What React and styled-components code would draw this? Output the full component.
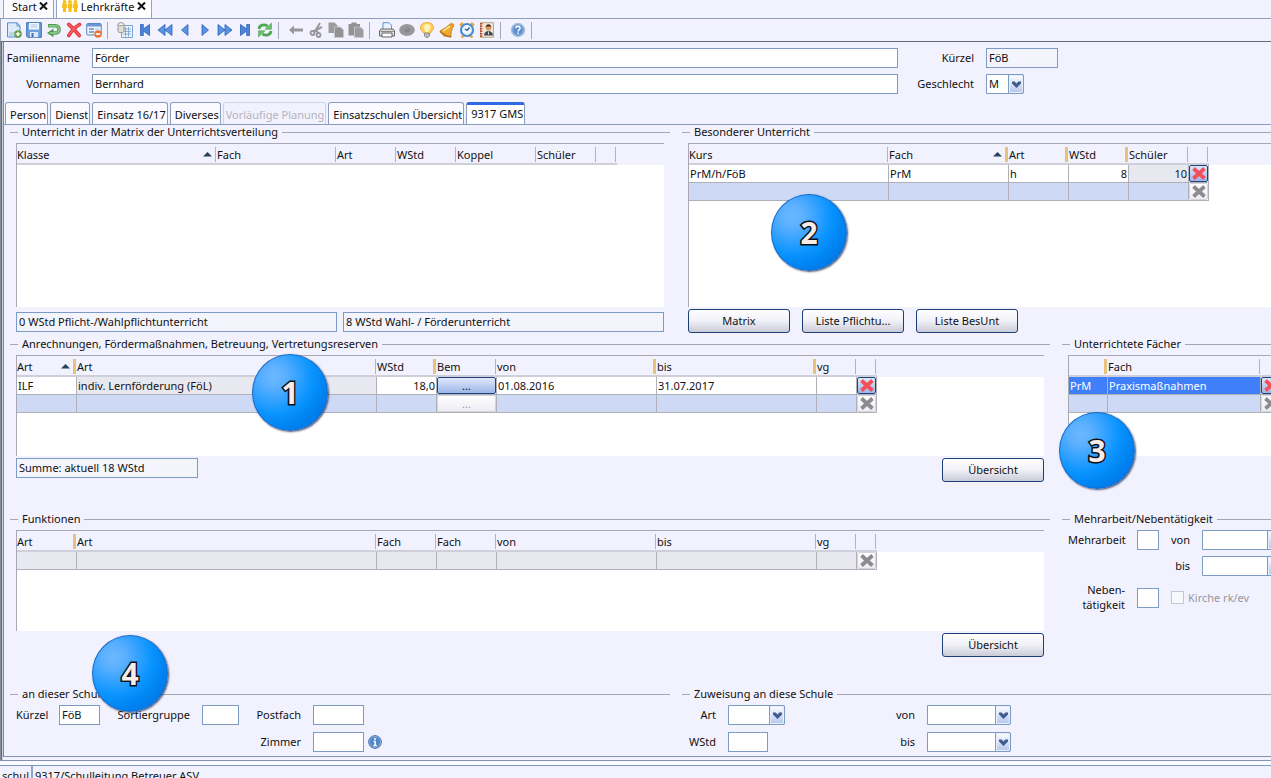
import React, { Fragment } from 'react'
import styled, { createGlobalStyle, css } from 'styled-components'

const App = () => {
    return (
        <Fragment>
            <GlobalStyle />
            <Window>
                <WindowTabs>
                    <WindowTab>
                        Start <CloseButton aria-label="Start schließen"><CloseIcon /></CloseButton>
                    </WindowTab>
                    <WindowTab $active>
                        <PeopleIcon /> Lehrkräfte <CloseButton aria-label="Lehrkräfte schließen"><CloseIcon /></CloseButton>
                    </WindowTab>
                </WindowTabs>
                <Toolbar />
                <Frame>
                    <Panel>
                        <PersonForm />
                        <SectionTabs />
                        <Content>
                            <UpperRow>
                                <Matrix />
                                <SpecialLessons />
                            </UpperRow>
                            <WideRow>
                                <Credits />
                                <Subjects />
                            </WideRow>
                            <WideRow $spaced>
                                <Functions />
                                <ExtraWork />
                            </WideRow>
                            <UpperRow $spaced>
                                <AtSchool />
                                <Assignment />
                            </UpperRow>
                        </Content>
                    </Panel>
                </Frame>
                <StatusBar>
                    <StatusItem>schul</StatusItem>
                    <StatusItem>9317/Schulleitung Betreuer ASV</StatusItem>
                </StatusBar>
                {markers.map((m) => (
                    <Marker key={m.label} $x={m.x} $y={m.y}>{m.label}</Marker>
                ))}
            </Window>
        </Fragment>
    )
}

const markers = [
    { label: '1', x: 290, y: 392 },
    { label: '2', x: 809, y: 232 },
    { label: '3', x: 1097, y: 450 },
    { label: '4', x: 130, y: 673 },
]

/* ---------- sections ---------- */

const Toolbar = () => (
    <ToolbarBar>
        {toolGroups.map((group, i) => (
            <Fragment key={i}>
                {group.map(([name, Icon]) => (
                    <ToolButton key={name} aria-label={name}><Icon /></ToolButton>
                ))}
                <Separator />
            </Fragment>
        ))}
    </ToolbarBar>
)

const PersonForm = () => (
    <PersonGrid>
        <Label htmlFor="familienname">Familienname</Label>
        <TextInput id="familienname" defaultValue="Förder" />
        <Label htmlFor="kuerzel">Kürzel</Label>
        <TextInput id="kuerzel" defaultValue="FöB" readOnly $width={72} />
        <Label htmlFor="vornamen">Vornamen</Label>
        <TextInput id="vornamen" defaultValue="Bernhard" />
        <Label htmlFor="geschlecht">Geschlecht</Label>
        <Combo id="geschlecht" width={38} value="M" />
    </PersonGrid>
)

const sections = ['Person', 'Dienst', 'Einsatz 16/17', 'Diverses', 'Vorläufige Planung', 'Einsatzschulen Übersicht', '9317 GMS']

const SectionTabs = () => (
    <TabList role="tablist">
        {sections.map((s) => (
            <Tab key={s} role="tab" aria-selected={s === '9317 GMS'} disabled={s === 'Vorläufige Planung'}>
                {s}
            </Tab>
        ))}
    </TabList>
)

const Matrix = () => (
    <Group>
        <Legend>Unterricht in der Matrix der Unterrichtsverteilung</Legend>
        <TableBox $height={164}>
            <Grid
                columns={[
                    { label: 'Klasse', width: 200, sorted: true },
                    { label: 'Fach', width: 120 },
                    { label: 'Art', width: 60 },
                    { label: 'WStd', width: 60 },
                    { label: 'Koppel', width: 80 },
                    { label: 'Schüler', width: 60 },
                    { label: '', width: 20 },
                ]}
                rows={[]}
            />
        </TableBox>
        <SummaryRow>
            <TextInput aria-label="Pflichtunterricht" defaultValue="0 WStd Pflicht-/Wahlpflichtunterricht" readOnly />
            <TextInput aria-label="Förderunterricht" defaultValue="8 WStd Wahl- / Förderunterricht" readOnly />
        </SummaryRow>
    </Group>
)

const SpecialLessons = () => (
    <Group $open>
        <Legend>Besonderer Unterricht</Legend>
        <TableBox $height={164}>
            <Grid
                columns={[
                    { label: 'Kurs', width: 200 },
                    { label: 'Fach', width: 120, sorted: true, mark: true },
                    { label: 'Art', width: 60, mark: true },
                    { label: 'WStd', width: 60, mark: true },
                    { label: 'Schüler', width: 60 },
                    { label: '', width: 20 },
                ]}
                rows={[
                    { cells: ['PrM/h/FöB', 'PrM', 'h', { text: '8', right: true }, { text: '10', right: true, tone: 'locked' }, { remove: true }] },
                    { tone: 'blank', cells: ['', '', '', '', '', { remove: false }] },
                ]}
            />
        </TableBox>
        <ButtonRow>
            <Button>Matrix</Button>
            <Button>Liste Pflichtu...</Button>
            <Button>Liste BesUnt</Button>
        </ButtonRow>
    </Group>
)

const Credits = () => (
    <Group>
        <Legend>Anrechnungen, Fördermaßnahmen, Betreuung, Vertretungsreserven</Legend>
        <TableBox $height={101}>
            <Grid
                columns={[
                    { label: 'Art', width: 60, sorted: true, mark: true },
                    { label: 'Art', width: 300 },
                    { label: 'WStd', width: 60, mark: true },
                    { label: 'Bem', width: 60 },
                    { label: 'von', width: 160, mark: true },
                    { label: 'bis', width: 160, mark: true },
                    { label: 'vg', width: 40 },
                    { label: '', width: 20 },
                ]}
                rows={[
                    {
                        cells: ['ILF', { text: 'indiv. Lernförderung (FöL)', tone: 'locked' }, { text: '18,0', right: true },
                            { more: true }, '01.08.2016', '31.07.2017', '', { remove: true }],
                    },
                    { tone: 'blank', cells: ['', '', '', { more: false }, '', '', '', { remove: false }] },
                ]}
            />
        </TableBox>
        <FooterRow>
            <TextInput aria-label="Summe" defaultValue="Summe: aktuell 18 WStd" readOnly $width={182} />
            <Button>Übersicht</Button>
        </FooterRow>
    </Group>
)

const Subjects = () => (
    <Group $open>
        <Legend>Unterrichtete Fächer</Legend>
        <TableBox $height={101}>
            <Grid
                columns={[
                    { label: '', width: 39, mark: true },
                    { label: 'Fach', width: 153 },
                    { label: '', width: 20 },
                ]}
                rows={[
                    { tone: 'selected', cells: ['PrM', 'Praxismaßnahmen', { remove: true }] },
                    { tone: 'blank', cells: ['', '', { remove: false }] },
                ]}
            />
        </TableBox>
    </Group>
)

const Functions = () => (
    <Group>
        <Legend>Funktionen</Legend>
        <TableBox $height={101}>
            <Grid
                columns={[
                    { label: 'Art', width: 60, mark: true },
                    { label: 'Art', width: 300 },
                    { label: 'Fach', width: 60 },
                    { label: 'Fach', width: 60 },
                    { label: 'von', width: 160 },
                    { label: 'bis', width: 160 },
                    { label: 'vg', width: 40 },
                    { label: '', width: 20 },
                ]}
                rows={[{ tone: 'locked', cells: ['', '', '', '', '', '', '', { remove: false }] }]}
            />
        </TableBox>
        <FooterRow>
            <span />
            <Button>Übersicht</Button>
        </FooterRow>
    </Group>
)

const ExtraWork = () => (
    <Group $open>
        <Legend>Mehrarbeit/Nebentätigkeit</Legend>
        <ExtraGrid>
            <Label htmlFor="mehrarbeit">Mehrarbeit</Label>
            <TextInput id="mehrarbeit" />
            <Label htmlFor="mehr-von">von</Label>
            <Combo id="mehr-von" width={81} />
            <span />
            <span />
            <Label htmlFor="mehr-bis">bis</Label>
            <Combo id="mehr-bis" width={81} />
            <Label htmlFor="neben">Neben-<br />tätigkeit</Label>
            <TextInput id="neben" />
            <CheckLabel>
                <CheckBox type="checkbox" disabled />
                Kirche rk/ev
            </CheckLabel>
        </ExtraGrid>
    </Group>
)

const AtSchool = () => (
    <Group>
        <Legend>an dieser Schule</Legend>
        <SchoolGrid>
            <Label htmlFor="schul-kuerzel">Kürzel</Label>
            <TextInput id="schul-kuerzel" defaultValue="FöB" />
            <Label htmlFor="sortiergruppe">Sortiergruppe</Label>
            <TextInput id="sortiergruppe" />
            <Label htmlFor="postfach">Postfach</Label>
            <TextInput id="postfach" $width={51} />
            <RoomLabel htmlFor="zimmer">Zimmer</RoomLabel>
            <RoomField>
                <TextInput id="zimmer" $width={51} />
                <InfoIcon />
            </RoomField>
        </SchoolGrid>
    </Group>
)

const Assignment = () => (
    <Group $open>
        <Legend>Zuweisung an diese Schule</Legend>
        <AssignmentGrid>
            <Label htmlFor="zu-art">Art</Label>
            <Combo id="zu-art" width={57} />
            <Label htmlFor="zu-von">von</Label>
            <Combo id="zu-von" width={84} />
            <Label htmlFor="zu-wstd">WStd</Label>
            <TextInput id="zu-wstd" $width={40} />
            <Label htmlFor="zu-bis">bis</Label>
            <Combo id="zu-bis" width={84} />
        </AssignmentGrid>
    </Group>
)

/* ---------- shared parts ---------- */

const Combo = ({ id, width, value = '' }) => (
    <ComboBox $width={width}>
        <ComboSelect id={id} defaultValue={value}>
            <option value={value}>{value}</option>
        </ComboSelect>
        <ComboArrow>
            <svg width="9" height="7" viewBox="0 0 9 7">
                <path d="M0 0.5h2.6L4.5 2.6 6.4 0.5H9v2L4.5 7 0 2.500z" fill="#3f5c90" />
            </svg>
        </ComboArrow>
    </ComboBox>
)

const Grid = ({ columns, rows }) => (
    <Table $width={columns.reduce((sum, c) => sum + c.width, 0)}>
        <colgroup>
            {columns.map((c, i) => <Col key={i} $width={c.width} />)}
        </colgroup>
        <thead>
            <tr>
                {columns.map((c, i) => (
                    <Th key={i}>
                        <HeadCell $mark={c.mark}>
                            {c.label}
                            {c.sorted && (
                                <svg width="9" height="5" viewBox="0 0 9 5"><path d="M4.5 0L9 4.500H0z" fill="#25435f" /></svg>
                            )}
                        </HeadCell>
                    </Th>
                ))}
            </tr>
        </thead>
        <tbody>
            {rows.map((row, r) => (
                <tr key={r}>
                    {row.cells.map((cell, i) => <Cell key={i} cell={cell} tone={row.tone} />)}
                </tr>
            ))}
        </tbody>
    </Table>
)

const Cell = ({ cell, tone }) => {
    if (cell.remove !== undefined) {
        return (
            <Td $flush>
                <CellButton aria-label="Zeile löschen" disabled={!cell.remove}>
                    <CrossIcon color={cell.remove ? '#f4505a' : '#8c8c8e'} />
                </CellButton>
            </Td>
        )
    }
    if (cell.more !== undefined) {
        return <Td $flush $tone={tone}><CellButton disabled={!cell.more}>...</CellButton></Td>
    }
    return <Td $tone={cell.tone || tone} $right={cell.right}>{cell.text ?? cell}</Td>
}

/* ---------- icons ---------- */

const Svg = ({ children, size = 16 }) => (
    <svg width={size} height={size} viewBox="0 0 16 16" fill="none" aria-hidden="true">{children}</svg>
)

const CloseIcon = () => (
    <svg width="9" height="8" viewBox="0 0 9 8"><path d="M1 0.500L8 7.500M8 0.500L1 7.500" stroke="#111" strokeWidth="2" /></svg>
)

const PeopleIcon = () => (
    <svg width="16" height="12" viewBox="0 0 16 12" fill="#f9bd17">
        {[0, 5.5, 11].map((x) => (
            <g key={x} transform={`translate(${x} 0)`}>
                <circle cx="2.500" cy="1.900" r="1.900" />
                <path d="M0.200 3.500h4.600v4.500L4 8.500V12H1V8.500l-0.800-0.500z" />
            </g>
        ))}
    </svg>
)

const CrossIcon = ({ color }) => (
    <svg width="16" height="15" viewBox="0 0 16 15">
        <path d="M2.500 2.500L13.500 12.500M13.500 2.500L2.500 12.500" stroke={color} strokeWidth="3.800" />
    </svg>
)

const NewIcon = () => (
    <Svg>
        <path d="M1.500 0.800h9.500l3 3.200v11H1.500z" fill="#dcebf9" stroke="#5a8fca" />
        <path d="M11 0.800V4h3z" fill="#fff" stroke="#5a8fca" />
        <path d="M3 10h9v4H3z" fill="#b9d5f0" />
        <circle cx="12" cy="12" r="3.800" fill="#5f9c3c" />
        <path d="M12 9.700v4.600M9.700 12h4.600" stroke="#fff" strokeWidth="1.500" />
    </Svg>
)

const SaveIcon = () => (
    <Svg>
        <path d="M0.700 0.700h14.600v14.600H1.700l-1-1z" fill="#6fa1dc" stroke="#3a6cb4" />
        <path d="M3 1h10v6.500H3z" fill="#f4f9ff" />
        <path d="M4.500 3h7M4.500 5h7" stroke="#a9c3e4" />
        <path d="M4 10h8v5.200H4z" fill="#dfe9f5" />
        <path d="M5.500 11h2v4h-2z" fill="#456fa8" />
    </Svg>
)

const UndoIcon = () => (
    <Svg>
        <path d="M2 3.800h7.500a3.600 3.600 0 0 1 0 7.200H6" stroke="#4f9c50" strokeWidth="3.600" />
        <path d="M7.500 6.500V15.200L1 10.900z" fill="#4f9c50" />
        <path d="M2.600 3.800h6.900a3.600 3.600 0 0 1 0 7.200H4" stroke="#86c884" strokeWidth="1.800" />
    </Svg>
)

const DeleteIcon = () => (
    <Svg>
        <path d="M2.800 2.500Q7 6 13.200 13.500M13.500 2.500Q6.500 7 2.800 13.500" stroke="#e23a3e" strokeWidth="3.600" strokeLinecap="round" />
        <path d="M2.800 2.500Q7 6 13.200 13.500M13.500 2.500Q6.500 7 2.800 13.500" stroke="#f2605e" strokeWidth="1.500" strokeLinecap="round" />
    </Svg>
)

const FormRemoveIcon = () => (
    <Svg>
        <rect x="0.700" y="1.500" width="14.500" height="11.500" rx="1" fill="#eef4fc" stroke="#5a84bd" />
        <path d="M1 2h14v2.500H1z" fill="#6c97d2" />
        <path d="M3 7h5M3 10h5" stroke="#6c8fbe" strokeWidth="1.300" />
        <path d="M9 7h4" stroke="#a9bfdd" />
        <circle cx="12" cy="12" r="3.800" fill="#e8763a" />
        <path d="M9.800 12h4.400" stroke="#fff" strokeWidth="1.600" />
    </Svg>
)

const ListIcon = () => (
    <Svg>
        <path d="M4.500 3.500h11v12h-11z" fill="#eef6fd" stroke="#7ba3d2" />
        <path d="M6 7h8M6 9.500h8M6 12h8M8.500 5v9.500M11.500 5v9.500" stroke="#86abd6" />
        <path d="M1 2.200v7c0 2 6 2 6 0v-7" fill="#dddcd6" stroke="#9c9a92" />
        <ellipse cx="4" cy="2.200" rx="3" ry="1.500" fill="#f7f6f2" stroke="#9c9a92" />
    </Svg>
)

const FirstIcon = () => (
    <Svg><path d="M3.500 2.500h2.800v4.500L12.500 2.500v11L6.300 9v4.500H3.500z" fill="#4b86da" stroke="#2b5fb4" strokeWidth="0.800" /></Svg>
)
const RewindIcon = () => (
    <Svg><path d="M8 2.500v11L1 8zM15 2.500v11L8 8z" fill="#5a93e2" stroke="#2b5fb4" strokeWidth="0.800" /></Svg>
)
const PrevIcon = () => (
    <Svg><path d="M11 2.500v11L4.500 8z" fill="#5a93e2" stroke="#2b5fb4" strokeWidth="0.800" /></Svg>
)
const NextIcon = () => (
    <Svg><path d="M5 2.500v11L11.500 8z" fill="#5a93e2" stroke="#2b5fb4" strokeWidth="0.800" /></Svg>
)
const ForwardIcon = () => (
    <Svg><path d="M1 2.500v11L8 8zM8 2.500v11L15 8z" fill="#5a93e2" stroke="#2b5fb4" strokeWidth="0.800" /></Svg>
)
const LastIcon = () => (
    <Svg><path d="M12.500 2.500H9.700v4.500L3.500 2.500v11L9.700 9v4.500h2.800z" fill="#4b86da" stroke="#2b5fb4" strokeWidth="0.800" /></Svg>
)

const RefreshIcon = () => (
    <Svg>
        <path d="M2 7c0.500-4 5-5.200 8.500-3M14 9c-0.500 4-5 5.200-8.500 3" stroke="#4fa653" strokeWidth="2.800" />
        <path d="M14.500 1v6.200H8z" fill="#6fbd70" stroke="#4fa653" strokeWidth="0.600" />
        <path d="M1.500 15V8.800H8z" fill="#6fbd70" stroke="#4fa653" strokeWidth="0.600" />
    </Svg>
)

const BackIcon = () => (
    <Svg><path d="M1 8l5-4.500V6.500h9v3H6v3z" fill="#97979b" /></Svg>
)

const CutIcon = () => (
    <Svg>
        <path d="M12 1L6.500 10M14 5L5 9.500M8 8l2.500 3.500" stroke="#97979b" strokeWidth="2" />
        <circle cx="4.500" cy="11" r="2" stroke="#97979b" strokeWidth="1.800" />
        <circle cx="10.500" cy="13" r="2" stroke="#97979b" strokeWidth="1.800" />
    </Svg>
)

const CopyIcon = () => (
    <Svg>
        <path d="M0.500 0.500h6l3 3V11h-9z" fill="#9b9b9d" />
        <path d="M6.500 5h6l3 3v7.500h-9z" fill="#929294" stroke="#c9c9d0" strokeWidth="0.800" />
    </Svg>
)

const PasteIcon = () => (
    <Svg>
        <path d="M0.500 2H3l1-1.500h4L9 2h3v11.500H0.500z" fill="#929294" />
        <path d="M6.500 5h6l3 3v7.500h-9z" fill="#9b9b9d" stroke="#c9c9d0" strokeWidth="0.800" />
    </Svg>
)

const PrintIcon = () => (
    <Svg>
        <path d="M4 0.700h6l2.500 2.500V8H4z" fill="#e8f3fe" stroke="#5e93cf" />
        <path d="M2 7h12l1.500 2v5H0.500V9z" fill="#dcdcdc" stroke="#666" />
        <path d="M3 11h10v4H3z" fill="#fafafa" stroke="#666" />
        <path d="M1.500 9.500h13" stroke="#888" />
    </Svg>
)

const EyeIcon = () => (
    <Svg>
        <ellipse cx="8" cy="8" rx="7.800" ry="6" fill="#98989b" />
        <circle cx="8" cy="8" r="2.500" fill="#848488" />
        <path d="M6.500 6.500l2 1" stroke="#b0b0b4" />
    </Svg>
)

const BulbIcon = () => (
    <Svg>
        <path d="M8 0.700c4 0 6.500 2 6.500 4.800 0 2.500-2 3.500-3.500 6H5C3.500 9 1.500 8 1.500 5.500 1.500 2.700 4 0.700 8 0.700z" fill="#ffd35a" stroke="#eca22c" />
        <path d="M8 2.200c3 0 4 2 3 4L9.500 10h-3L5 6.200c-1-2 0-4 3-4z" fill="#fff3b8" />
        <path d="M5.500 11h5v3l-1.500 1.500H7L5.500 14z" fill="#b9b9b9" stroke="#7d7d7d" strokeWidth="0.800" />
    </Svg>
)

const BellIcon = () => (
    <Svg>
        <path d="M11 2C8.500 5 5 6.500 1 9c2 3 6 5.500 11 6-0.500-4 0.500-7.500 2.500-11z" fill="#f0ab2e" stroke="#c9821f" />
        <path d="M1 9.200c2.500 3 6 5.200 11 5.600" stroke="#b87316" strokeWidth="1.600" />
        <path d="M11 4C9 6 6.500 7.300 4 9" stroke="#ffe08a" strokeWidth="1.600" />
        <path d="M11.800 0.600l3.700 1.600-1.200 2.600-3.600-1.700z" fill="#e39a26" />
        <circle cx="5.500" cy="13" r="1.500" fill="#c47a18" />
    </Svg>
)

const ClockIcon = () => (
    <Svg>
        <path d="M1 3.500l3-2.500M15 3.500l-3-2.500M2.500 15.500l2.500-2M13.500 15.500l-2.500-2" stroke="#eda83c" strokeWidth="2.600" />
        <circle cx="8" cy="8" r="6" fill="#eef7ff" stroke="#4a8ed2" strokeWidth="2.200" />
        <path d="M8 8.500L10.500 5.500M8 8.500L6 7" stroke="#35557e" strokeWidth="1.300" />
    </Svg>
)

const BookIcon = () => (
    <Svg>
        <path d="M1.500 0.700h13v14.600h-13z" fill="#f2e6d4" stroke="#b8a98c" />
        <path d="M2.200 1v14" stroke="#c44230" strokeWidth="2.200" strokeDasharray="1.500 1" />
        <circle cx="9.500" cy="6" r="2.600" fill="#d89b62" />
        <path d="M6.700 6c-0.400-5 6-5 5.600 0l-1-1.500H7.700z" fill="#4a2a14" />
        <path d="M5 13.500c0-6 9-6 9 0z" fill="#424a58" />
        <path d="M9.500 9.500v3" stroke="#d0d6de" />
    </Svg>
)

const HelpIcon = () => (
    <Svg>
        <circle cx="8" cy="8" r="6.500" fill="#5b8fd0" stroke="#a9c0e0" strokeWidth="1.400" />
        <circle cx="8" cy="8" r="5" stroke="#8fb4e2" strokeWidth="0.800" />
        <path d="M6 6.300c0-2.600 4.200-2.600 4.100 0C10.100 7.800 8 7.800 8 9.600M8 10.600v1.500" stroke="#fff" strokeWidth="1.500" />
    </Svg>
)

const InfoIcon = () => (
    <svg width="14" height="14" viewBox="0 0 14 14">
        <circle cx="7" cy="7" r="6.300" fill="#5085c6" stroke="#3a66a2" />
        <circle cx="7" cy="7" r="5.500" fill="none" stroke="#9dbde2" strokeWidth="0.800" />
        <path d="M7 3v2M5.500 6.500h1.700V10.500M5.300 10.600h3.500" stroke="#fff" strokeWidth="1.500" fill="none" />
    </svg>
)

const toolGroups = [
    [['Neu', NewIcon], ['Speichern', SaveIcon], ['Rückgängig', UndoIcon], ['Löschen', DeleteIcon], ['Formular leeren', FormRemoveIcon]],
    [['Liste', ListIcon], ['Erster', FirstIcon], ['Schnell zurück', RewindIcon], ['Zurück', PrevIcon], ['Weiter', NextIcon],
        ['Schnell weiter', ForwardIcon], ['Letzter', LastIcon], ['Aktualisieren', RefreshIcon]],
    [['Navigieren', BackIcon], ['Ausschneiden', CutIcon], ['Kopieren', CopyIcon], ['Einfügen', PasteIcon]],
    [['Drucken', PrintIcon], ['Vorschau', EyeIcon], ['Tipp', BulbIcon], ['Hinweis', BellIcon], ['Wecker', ClockIcon], ['Adressbuch', BookIcon]],
    [['Hilfe', HelpIcon]],
]

/* ---------- styles ---------- */

const line = '#7b9ac4'
const face = '#f2f2fe'

const GlobalStyle = createGlobalStyle`
    *, *::before, *::after {
        box-sizing: border-box;
    }
    body {
        margin: 0;
        background: ${face};
        overflow: hidden;
    }
    body, button, input, select {
        font-family: 'Noto Sans', 'Open Sans', sans-serif;
        font-size: 11px;
        line-height: 15px;
        color: #111;
    }
    button {
        padding: 0;
    }
    svg {
        display: block;
        flex: none;
    }
`

const Window = styled.div`
    position: relative;
    height: 100vh;
    overflow: hidden;
`

const WindowTabs = styled.div`
    display: flex;
    gap: 2px;
    height: 19px;
    padding-left: 3px;
    border-bottom: 1px solid #8fa0be;
`

const WindowTab = styled.div`
    display: flex;
    align-items: center;
    gap: 2px;
    height: 18px;
    padding: 0 5px 6px 8px;
    border: solid #93a3c4;
    border-width: 0 1px;
    background: #fbfbff;
    ${({ $active }) => $active && css`
        gap: 3px;
        padding-left: 5px;
        background: #fff;
    `}
`

const CloseButton = styled.button`
    border: 0;
    background: none;
`

const ToolbarBar = styled.div`
    display: flex;
    align-items: center;
    height: 23px;
    padding-left: 3px;
    border-left: 1px solid #9aa3b5;
    border-bottom: 1px solid #666b7c;
`

const ToolButton = styled.button`
    display: flex;
    align-items: center;
    justify-content: center;
    width: 20px;
    height: 20px;
    border: 0;
    background: none;
`

const Separator = styled.span`
    width: 1px;
    height: 17px;
    margin: 0 7px 0 3px;
    background: #a9a9b4;
`

const Frame = styled.div`
    padding: 0 0 3px 3px;
    border-bottom: 1px solid #8494b0;
    background: linear-gradient(to right, #868e9c 1px, #626a78 1px 2px, #c9cedb 2px 3px, ${face} 3px);
`

const Panel = styled.div`
    border-left: 1px solid #7e88a0;
    border-bottom: 1px solid #8494b0;
    background: ${face};
    overflow: hidden;
`

const PersonGrid = styled.div`
    display: grid;
    grid-template-columns: 76px 1fr 64px 285px;
    gap: 6px 12px;
    align-items: center;
    padding: 6px 0 8px;
`

const Label = styled.label`
    padding-bottom: 2px;
    text-align: right;
    white-space: nowrap;
`

const TextInput = styled.input`
    flex: none;
    width: ${({ $width }) => ($width ? `${$width}px` : '100%')};
    height: 20px;
    min-width: 0;
    margin: 0;
    padding: 0 2px 2px;
    border: 1px solid ${line};
    border-radius: 0;
    background: #fff;
    outline: none;
    &:read-only {
        background: #f4f4fd;
    }
`

const ComboBox = styled.div`
    display: grid;
    width: ${({ $width }) => $width}px;
    height: 20px;
`

const ComboSelect = styled.select`
    grid-area: 1 / 1;
    width: 100%;
    height: 20px;
    margin: 0;
    padding: 0 16px 2px 2px;
    border: 1px solid ${line};
    border-radius: 0 2px 2px 0;
    background: #fff;
    appearance: none;
    outline: none;
`

const ComboArrow = styled.span`
    grid-area: 1 / 1;
    justify-self: end;
    display: flex;
    align-items: center;
    justify-content: center;
    width: 16px;
    height: 20px;
    border: 1px solid ${line};
    border-radius: 0 2px 2px 0;
    background: linear-gradient(#fdfdff, #b4c6ec);
    box-shadow: inset 0 0 0 1px #e8eefb;
    pointer-events: none;
`

const TabList = styled.div`
    display: flex;
    align-items: flex-end;
    gap: 2px;
    height: 23px;
    padding-left: 1px;
    border-bottom: 1px solid #8a9dc0;
`

const Tab = styled.button`
    height: 22px;
    padding: 2px 1px 0 4px;
    border: 1px solid #8a9dc0;
    border-bottom: 0;
    border-radius: 3px 3px 0 0;
    background: #fafaff;
    white-space: nowrap;
    &:disabled {
        padding-left: 2px;
        border-color: #d0d4e2;
        background: ${face};
        color: #b4b4bc;
    }
    &[aria-selected='true'] {
        padding-top: 0;
        padding-bottom: 3px;
        border-top: 3px solid #2e6be2;
        background: #fff;
    }
`

const Content = styled.div`
    padding: 0 0 4px 6px;
`

const UpperRow = styled.div`
    display: grid;
    grid-template-columns: minmax(0, 660fr) minmax(0, 589fr);
    gap: 12px;
    margin-top: ${({ $spaced }) => ($spaced ? 30 : 0)}px;
`

const WideRow = styled(UpperRow)`
    grid-template-columns: minmax(0, 1040fr) minmax(0, 209fr);
`

const Group = styled.fieldset`
    min-width: 0;
    margin: 0;
    padding: 3px ${({ $open }) => ($open ? 0 : 6)}px 0 6px;
    border: 0;
    border-top: 1px solid #a6a6b2;
`

const Legend = styled.legend`
    height: 15px;
    margin-left: 2px;
    padding: 0 4px;
    line-height: 13px;
    white-space: nowrap;
`

const TableBox = styled.div`
    height: ${({ $height }) => $height}px;
    border: solid #a9a9b5;
    border-width: 1px 0 0 1px;
    background: linear-gradient(${face} 21px, #fff 21px);
    overflow: hidden;
`

const Table = styled.table`
    width: ${({ $width }) => $width}px;
    table-layout: fixed;
    border-collapse: separate;
    border-spacing: 0;
`

const Col = styled.col`
    width: ${({ $width }) => $width}px;
`

const Th = styled.th`
    height: 21px;
    padding: 2px 1px 0 0;
    border-bottom: 2px solid #cfcfda;
    font-weight: normal;
    text-align: left;
`

const HeadCell = styled.div`
    display: flex;
    align-items: center;
    justify-content: space-between;
    height: 15px;
    padding-right: 3px;
    border-right: 1px solid #b4b4c0;
    ${({ $mark }) => $mark && css`
        border-right: 3px solid #e6c27c;
    `}
`

const tones = {
    blank: '#cdd9f5',
    locked: '#e8e8f1',
    selected: '#3f80fa',
}

const Td = styled.td`
    height: 18px;
    padding: 0 1px;
    border: solid #b0b0b8;
    border-width: 0 1px 1px 0;
    background: ${({ $tone }) => tones[$tone] || '#fff'};
    color: ${({ $tone }) => ($tone === 'selected' ? '#fff' : 'inherit')};
    text-align: ${({ $right }) => ($right ? 'right' : 'left')};
    white-space: nowrap;
    ${({ $flush }) => $flush && css`
        padding: 0;
    `}
`

const CellButton = styled.button`
    display: flex;
    align-items: center;
    justify-content: center;
    width: 100%;
    height: 17px;
    border: 1px solid #1f427c;
    border-radius: 2px;
    background: linear-gradient(#dfe8fb, #9db6e8);
    &:disabled {
        border-color: #d4d4dc;
        background: linear-gradient(#fff, #ececf4);
        color: #9a9aa2;
    }
`

const SummaryRow = styled.div`
    display: grid;
    grid-template-columns: 1fr 1fr;
    gap: 6px;
    padding-top: 5px;
`

const ButtonRow = styled.div`
    display: flex;
    gap: 12px;
    padding: 2px 0 4px;
`

const FooterRow = styled.div`
    display: flex;
    align-items: flex-start;
    justify-content: space-between;
    padding-top: 2px;
`

const Button = styled.button`
    width: 102px;
    height: 24px;
    padding-bottom: 1px;
    border: 1px solid #1d3f78;
    border-radius: 3px;
    background: linear-gradient(#fff, #f0f0f8 50%, #cbcbd8);
`

const ExtraGrid = styled.div`
    display: grid;
    grid-template-columns: 57px 22px 19px 81px;
    gap: 6px 12px;
    align-items: center;
`

const CheckLabel = styled.label`
    grid-column: span 2;
    display: flex;
    align-items: center;
    gap: 4px;
    padding-bottom: 2px;
    color: #97979f;
`

const CheckBox = styled.input`
    width: 13px;
    height: 13px;
    margin: 0;
    border: 1px solid #c6c6d0;
    background: #f8f8ff;
    appearance: none;
`

const SchoolGrid = styled.div`
    display: grid;
    grid-template-columns: 31px 41px 78px 37px 50px 69px;
    gap: 7px 12px;
    align-items: center;
`

const RoomLabel = styled(Label)`
    grid-column: 5;
`

const RoomField = styled.div`
    display: flex;
    align-items: center;
    gap: 4px;
`

const AssignmentGrid = styled.div`
    display: grid;
    grid-template-columns: 28px 57px 118px 84px;
    gap: 7px 12px;
    align-items: center;
`

const StatusBar = styled.footer`
    display: flex;
    margin-top: 4px;
    border-top: 1px solid ${line};
    background: ${face};
    box-shadow: 0 -4px #fbfbff;
`

const StatusItem = styled.span`
    padding: 2px 2px 3px;
    & + & {
        border-left: 2px solid #8fa4c6;
    }
`

const Marker = styled.div`
    position: absolute;
    left: ${({ $x }) => $x - 38}px;
    top: ${({ $y }) => $y - 38}px;
    display: flex;
    align-items: center;
    justify-content: center;
    width: 76px;
    height: 77px;
    border: 1px solid #1268cc;
    border-radius: 50%;
    background: radial-gradient(circle at 28% 28%, #6bb8ff 0%, #5cb0ff 15%, #0a94ff 50%, #0086f4 65%, #0069d4 100%);
    box-shadow: 1px 1px 2px rgba(30, 40, 70, 0.8);
    color: #f7ece8;
    font-size: 30px;
    font-weight: 700;
    line-height: 40px;
    -webkit-text-stroke: 3px #0b1018;
    paint-order: stroke;
`

export default App
